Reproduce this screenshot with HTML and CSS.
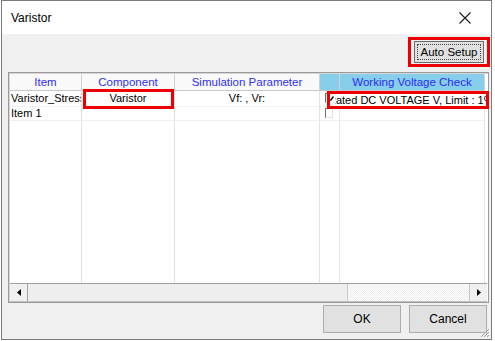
FILE: index.html
```html
<!doctype html>
<html lang="en">
    <head>
        <meta charset="UTF-8" />
        <title>Varistor</title>
        <link rel="stylesheet" href="styles.css">
    </head>
    <body>
        <div class="window">
            <div class="titlebar">
                <span class="title">Varistor</span>
                <svg class="close" width="12" height="12" viewBox="0 0 12 12">
                    <path d="M0.5 0.5 L11.5 11.5 M11.5 0.5 L0.5 11.5" stroke="#1a1a1a" stroke-width="1.1" fill="none" />
                </svg>
            </div>

            <div class="content">
                <div class="toolbar">
                    <div class="mark">
                        <button class="btn focus"><span>Auto Setup</span></button>
                    </div>
                </div>

                <div class="grid">
                    <div class="row header">
                        <div class="cell">Item</div>
                        <div class="cell">Component</div>
                        <div class="cell">Simulation Parameter</div>
                        <div class="cell blue"></div>
                        <div class="cell blue">Working Voltage Check</div>
                    </div>
                    <div class="row">
                        <div class="cell left">Varistor_Stress</div>
                        <div class="cell marked">Varistor</div>
                        <div class="cell">Vf: , Vr:</div>
                        <div class="cell check"><span class="box"></span></div>
                        <div class="cell editing">
                            <div class="editor">
                                <svg class="tick" width="4" height="5" viewBox="0 0 4 5">
                                    <path d="M0.5 4.5 L3.5 0.5" stroke="#000" stroke-width="1.4" />
                                </svg>
                                <div class="edit-clip">
                                    <span class="edit-text">Rated DC VOLTAGE V, Limit : 1%</span>
                                </div>
                            </div>
                        </div>
                    </div>
                    <div class="row">
                        <div class="cell left">Item 1</div>
                        <div class="cell"></div>
                        <div class="cell"></div>
                        <div class="cell check"><span class="box"></span></div>
                        <div class="cell"></div>
                    </div>
                    <div class="row filler">
                        <div class="cell"></div>
                        <div class="cell"></div>
                        <div class="cell"></div>
                        <div class="cell"></div>
                        <div class="cell"></div>
                    </div>

                    <div class="scrollbar">
                        <div class="arrow">
                            <svg width="4" height="7" viewBox="0 0 4 7"><path d="M4 0 L0 3.5 L4 7 Z" fill="#000" /></svg>
                        </div>
                        <div class="thumb"></div>
                        <div class="track"></div>
                        <div class="arrow right">
                            <svg width="4" height="7" viewBox="0 0 4 7"><path d="M0 0 L4 3.5 L0 7 Z" fill="#000" /></svg>
                        </div>
                    </div>
                </div>

                <div class="footer">
                    <button class="btn big">OK</button>
                    <button class="btn big">Cancel</button>
                </div>
            </div>

            <svg class="grip" width="10" height="10" viewBox="0 0 10 10">
                <path d="M9 1 L1 9 M9 4 L4 9 M9 7 L7 9" stroke="#a0a0a0" stroke-width="1" />
            </svg>
        </div>
    </body>
</html>
```

FILE: styles.css
```css
body {
    margin: 0;
    background-color: #ffffff;
    font-family: "Liberation Sans", Arial, sans-serif;
    font-size: 11px;
    color: #000;
}
.window {
    position: relative;
    margin-left: 1px;
    width: 491px;
    height: 340px;
    box-sizing: border-box;
    border: 1px solid #7a7a7a;
    display: flex;
    flex-direction: column;
    background-color: #f0f0f0;
}
.titlebar {
    height: 32px;
    flex: none;
    background-color: #ffffff;
    display: flex;
    align-items: center;
    justify-content: space-between;
    padding: 1px 20px 0 9px;
}
.title {
    font-size: 12px;
    color: #000;
}
.close {
    display: block;
}
.content {
    flex: 1;
    display: flex;
    flex-direction: column;
    padding: 0 1px 0 6px;
}
.toolbar {
    display: flex;
    justify-content: flex-end;
    padding-top: 3px;
    height: 35px;
}
.mark {
    border: 3px solid #ee0000;
    padding: 1px 3px;
    box-sizing: border-box;
    height: 30px;
}
.btn {
    font-family: "Liberation Sans", Arial, sans-serif;
    font-size: 11px;
    color: #000;
    background-color: #e1e1e1;
    border: 1px solid #adadad;
    padding: 0;
    margin: 0;
}
.btn.focus {
    width: 70px;
    height: 22px;
    padding: 2px;
    border-color: #6a6a6a;
    font-size: 11.5px;
    white-space: nowrap;
}
.btn.focus span {
    display: block;
    height: 100%;
    box-sizing: border-box;
    border: 1px dotted #444;
    line-height: 15px;
}
.grid {
    height: 231px;
    box-sizing: border-box;
    border: 1px solid #9a9a9a;
    box-shadow: inset 1px 1px #d6d6d6;
    background-color: #ffffff;
    display: flex;
    flex-direction: column;
    padding: 1px 1px 0 1px;
    margin-right: 1px;
}
.row {
    display: grid;
    grid-template-columns: 72px 93px 145px 20px 145px;
    height: 15px;
    flex: none;
}
.row .cell {
    border-right: 1px solid #e2e2e2;
    border-bottom: 1px solid #f0f0f0;
    text-align: center;
    white-space: nowrap;
    overflow: hidden;
    line-height: 15px;
}
.row .cell.left {
    text-align: left;
    padding-left: 1px;
}
.header {
    height: 17px;
}
.header .cell {
    background-color: #f9f9f9;
    color: #2f2fff;
    font-size: 11.5px;
    line-height: 17px;
    border-right: 1px solid #d2d2d2;
    border-bottom: 1px solid #c8c8c8;
}
.header .cell.blue {
    background-color: #87ceeb;
    color: #2b2bf5;
}
.cell.marked {
    position: relative;
    overflow: visible;
}
.cell.marked::after {
    content: "";
    position: absolute;
    left: 1px;
    right: 0;
    top: -2px;
    bottom: -3px;
    border: 3px solid #ee0000;
}
.cell.check {
    text-align: left;
    padding-left: 5px;
}
.box {
    display: inline-block;
    width: 8px;
    height: 10px;
    box-sizing: border-box;
    border-top: 1px solid #707070;
    border-left: 1px solid #707070;
    border-right: 1px solid #e0e0e0;
    border-bottom: 1px solid #e0e0e0;
    vertical-align: -1px;
    background-color: #fff;
}
.cell.editing {
    position: relative;
    overflow: visible;
}
.editor {
    position: absolute;
    left: -13px;
    right: -5px;
    top: 0;
    height: 18px;
    box-sizing: border-box;
    border: 3px solid #ee0000;
    background-color: #ffffff;
    display: flex;
    align-items: center;
    z-index: 2;
}
.tick {
    flex: none;
    margin: 0 1px 3px 0;
}
.edit-clip {
    flex: 1;
    overflow: hidden;
    white-space: nowrap;
    line-height: 12px;
}
.edit-text {
    display: inline-block;
    margin-left: -7px;
}
.filler {
    flex: 1;
}
.filler .cell {
    border-bottom: none;
}
.scrollbar {
    height: 19px;
    flex: none;
    box-sizing: border-box;
    border-top: 1px solid #a0a0a0;
    border-bottom: 1px solid #c0c0c0;
    display: flex;
    background-color: #f0f0f0;
}
.arrow {
    width: 17px;
    flex: none;
    display: flex;
    align-items: center;
    justify-content: center;
    border-right: 1px solid #a0a0a0;
    background-color: #f0f0f0;
}
.arrow.right {
    border-right: none;
    border-left: 1px solid #c8c8c8;
}
.thumb {
    width: 319px;
    flex: none;
    background-color: #eeeeee;
    border-right: 1px solid #c8c8c8;
}
.track {
    flex: 1;
    background-image: repeating-conic-gradient(#ffffff 0 25%, #ececec 0 50%);
    background-size: 2px 2px;
}
.footer {
    display: flex;
    justify-content: flex-end;
    gap: 8px;
    padding: 2px 3px 0 0;
}
.btn.big {
    width: 78px;
    height: 28px;
    font-size: 12px;
}
.grip {
    position: absolute;
    right: 1px;
    bottom: 1px;
}
```
